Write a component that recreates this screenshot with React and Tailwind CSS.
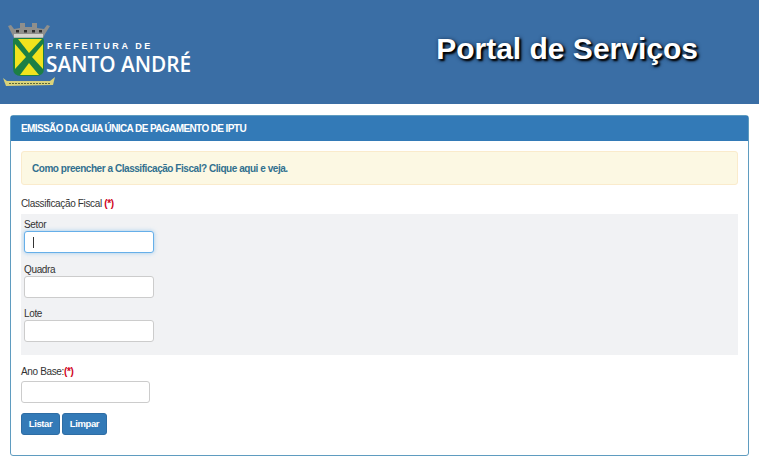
const Crest = () => (
    <svg width="52" height="66" viewBox="3 22 52 66" className="shrink-0">
        {/* coroa */}
        <path d="M8 26 L11 25 L14 29 L20 28 L20 23 L25 23 L25 27 L32 27 L32 23 L37 23 L37 28 L44 29 L47 25 L50 26 L45 34 L43 38 L14 38 L12 34 Z" fill="#8f8f8c" />
        <rect x="14" y="34" width="29" height="3.5" fill="#d4d4cf" />
        <rect x="16" y="30" width="3" height="2.5" fill="#2f2f2f" />
        <rect x="24" y="30" width="3" height="2.5" fill="#2f2f2f" />
        <rect x="32" y="30" width="3" height="2.5" fill="#2f2f2f" />
        <rect x="39" y="30" width="3" height="2.5" fill="#2f2f2f" />
        {/* escudo */}
        <path d="M13 40 Q13 38 15 38 L42 38 Q44 38 44 40 L44 68 Q44 76 36 76 L21 76 Q13 76 13 68 Z" fill="#1c7f45" />
        <path d="M18 39 L42 39 L29 53 Z" fill="#f2e31d" />
        <path d="M15 44 L26 57 L15 69 Z" fill="#f2e31d" />
        <path d="M43 44 L32 57 L43 69 Z" fill="#f2e31d" />
        <path d="M20 75 L29 63 L39 75 Z" fill="#f2e31d" />
        {/* faixa */}
        <path d="M3 78 L7 81 L50 81 L55 77 L53 85 L6 86 Z" fill="#d9d27a" />
        <path d="M9 83.5 L50 83.5" stroke="#5c6a3a" strokeWidth="1" strokeDasharray="2 1" />
    </svg>
)

const Field = ({ label, className = "" }) => (
    <div className={className}>
        <label className="block pt-[1px] text-[10px] leading-[12px] tracking-[-0.35px] text-[#333]">{label}</label>
        <input type="text" className="block h-[22px] w-[130px] rounded-[3px] border border-[#ccc] bg-white" />
    </div>
)

const App = () => {
    return (
        <div className="h-[466px] w-[759px] overflow-hidden bg-white font-['Liberation_Sans',Arial,sans-serif]">
            <header className="flex h-[104px] items-start bg-[#3a6ea5]">
                <div className="mt-[22px] ml-[3px] flex items-start">
                    <Crest />
                    <div className="mt-[19px] -ml-[9px] text-white">
                        <div className="pl-[1px] text-[9px] font-bold leading-[11px] tracking-[2.6px] whitespace-nowrap">PREFEITURA DE</div>
                        <div className="mt-[1px] font-['Open_Sans',sans-serif] text-[20.8px] font-semibold leading-[22px] whitespace-nowrap">SANTO ANDRÉ</div>
                    </div>
                </div>
                <h1 className="mt-[32px] ml-[245px] text-[30px] font-bold leading-[34px] whitespace-nowrap text-white [text-shadow:2px_2px_2px_#000,1px_1px_4px_#0b1a33]">
                    Portal de Serviços
                </h1>
            </header>

            <section className="mx-[10px] mt-[11px] h-[341px] rounded-[3px] border border-[#5f9cc0]">
                <div className="flex h-[25px] items-center bg-[#337ab7] px-[10px] text-[10px] font-bold tracking-[-0.6px] text-white">
                    EMISSÃO DA GUIA ÚNICA DE PAGAMENTO DE IPTU
                </div>

                <div className="px-[10px] pt-[10px]">
                    <div className="flex h-[34px] items-center rounded-[3px] border border-[#faebcc] bg-[#fcf8e3] px-[10px] text-[10px] font-bold tracking-[-0.45px] text-[#31708f]">
                        Como preencher a Classificação Fiscal? Clique aqui e veja.
                    </div>

                    <p className="mt-[12px] text-[10px] leading-[14px] tracking-[-0.35px] text-[#333]">
                        Classificação Fiscal <span className="font-bold text-[#d0021b]">(*)</span>
                    </p>

                    <div className="mt-[3px] h-[141px] bg-[#f1f2f4] px-[3px] pt-[4px]">
                        <div>
                            <label className="block pt-[1px] text-[10px] leading-[12px] tracking-[-0.35px] text-[#333]">Setor</label>
                            <div className="flex h-[22px] w-[130px] items-center rounded-[3px] border border-[#66afe9] bg-white pl-[8px] shadow-[0_0_4px_rgba(102,175,233,0.6)]">
                                <span className="h-[11px] w-px bg-[#333]" />
                            </div>
                        </div>
                        <Field label="Quadra" className="mt-[10px]" />
                        <Field label="Lote" className="mt-[9px]" />
                    </div>

                    <p className="mt-[10px] text-[10px] leading-[14px] tracking-[-0.35px] text-[#333]">
                        Ano Base:<span className="font-bold text-[#d0021b]">(*)</span>
                    </p>
                    <input type="text" className="mt-[2px] block h-[22px] w-[129px] rounded-[3px] border border-[#ccc] bg-white" />

                    <div className="mt-[10px] flex gap-[2px]">
                        <button type="button" className="h-[22px] w-[39px] rounded-[3px] border border-[#2e6da4] bg-[#337ab7] text-[9.5px] font-bold tracking-[-0.4px] text-white">Listar</button>
                        <button type="button" className="h-[22px] w-[45px] rounded-[3px] border border-[#2e6da4] bg-[#337ab7] text-[9.5px] font-bold tracking-[-0.4px] text-white">Limpar</button>
                    </div>
                </div>
            </section>
        </div>
    )
}

export default App
